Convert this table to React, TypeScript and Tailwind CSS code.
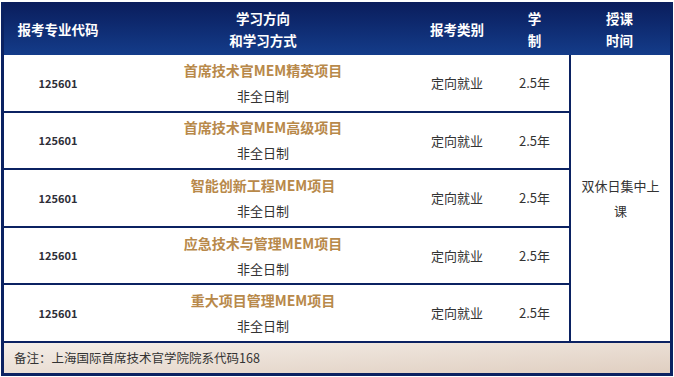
import React from "react";

const rows = [
  "首席技术官MEM精英项目",
  "首席技术官MEM高级项目",
  "智能创新工程MEM项目",
  "应急技术与管理MEM项目",
  "重大项目管理MEM项目",
];

export default function App() {
  return (
    <div className="w-[674px] h-[377px] bg-white pt-[2px] pl-[1px]" style={{ fontFamily: '"Noto Sans CJK SC", "Noto Sans", sans-serif' }}>
      <div className="w-[672px] h-[374px] border-x-[3px] border-b-[3px] border-[#0b2262] flex flex-col">
        {/* header */}
        <div className="h-[53px] flex bg-gradient-to-b from-[#0a1d5c] to-[#143c8a] text-white font-bold text-[13.5px] leading-[22px]">
          <div className="w-[108px] flex items-center justify-center">报考专业代码</div>
          <div className="w-[302px] flex flex-col items-center justify-center">
            <span>学习方向</span>
            <span>和学习方式</span>
          </div>
          <div className="w-[86px] flex items-center justify-center">报考类别</div>
          <div className="w-[69px] flex flex-col items-center justify-center">
            <span>学</span>
            <span>制</span>
          </div>
          <div className="flex-1 flex flex-col items-center justify-center">
            <span>授课</span>
            <span>时间</span>
          </div>
        </div>
        {/* body */}
        <div className="flex h-[288px]">
          <div className="w-[565px] flex flex-col">
            {rows.map((t) => (
              <div key={t} className="h-[57.6px] flex border-b-2 border-[#0b2262] text-[#333333]">
                <div className="w-[108px] flex items-center justify-center text-[11px] font-bold text-[#2e2e38]">125601</div>
                <div className="w-[302px] flex flex-col items-center justify-center leading-[26px] text-[13px]">
                  <span className="font-bold text-[14px] text-[#b8894a]">{t}</span>
                  <span>非全日制</span>
                </div>
                <div className="w-[86px] flex items-center justify-center text-[13px]">定向就业</div>
                <div className="w-[69px] flex items-center justify-center text-[13px]">2.5年</div>
              </div>
            ))}
          </div>
          <div className="flex-1 border-l-2 border-b-2 border-[#0b2262] flex items-center justify-center px-[9px] text-center text-[13px] leading-[25px] text-[#333333]">
            双休日集中上课
          </div>
        </div>
        {/* footer */}
        <div className="flex-1 flex items-center pl-[10px] bg-gradient-to-br from-[#f4eee8] to-[#e0cfc1] text-[12.5px] text-[#333333]">
          备注：上海国际首席技术官学院院系代码168
        </div>
      </div>
    </div>
  );
}
